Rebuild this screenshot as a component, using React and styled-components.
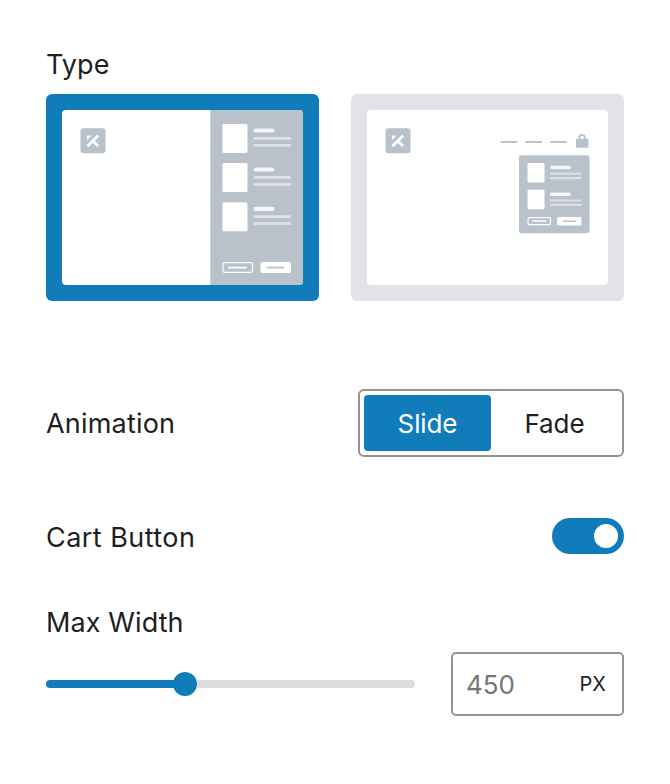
import React from "react";
import styled, { createGlobalStyle } from "styled-components";

const BLUE = "#117cba";
const SLATE = "#b9c1cb";

const GlobalStyle = createGlobalStyle`
  * { box-sizing: border-box; }
  body {
    margin: 0;
    background: #fff;
    color: #1e1e1e;
    font-family: Inter, "Liberation Sans", sans-serif;
  }
  button { font-family: inherit; color: inherit; margin: 0; }
`;

const Panel = styled.main`
  width: 670px;
  height: 784px;
  padding: 48px 46px 0;
  display: flex;
  flex-direction: column;
`;

const Label = styled.span`
  padding-top: ${(p) => p.$drop || 1}px;
  font-size: 27px;
  line-height: 32px;
  letter-spacing: ${(p) => p.$tracking};
  white-space: nowrap;
`;

const TypeOptions = styled.div`
  display: flex;
  justify-content: space-between;
  margin-top: 13px;
`;

const TypeCard = styled.button`
  width: 273px;
  height: 207px;
  padding: 16px;
  border: 0;
  border-radius: 6px;
  background: ${(p) => (p.$selected ? BLUE : "#e1e3e9")};
`;

const Preview = styled.svg`
  display: block;
  width: 241px;
  height: 175px;
  border-radius: 4px;
  background: #fff;
`;

const Row = styled.div`
  display: flex;
  align-items: center;
  justify-content: space-between;
  height: ${(p) => p.$height}px;
  margin-top: ${(p) => p.$gap}px;
`;

const Segmented = styled.div`
  display: flex;
  width: 266px;
  height: 68px;
  padding: 4px;
  border: 2px solid #949494;
  border-radius: 6px;
`;

const Segment = styled.button`
  flex: 1;
  height: 56px;
  padding: 1px 0 0;
  border: 0;
  border-radius: 4px;
  font-size: 26px;
  letter-spacing: -0.1px;
  background: ${(p) => (p.$active ? BLUE : "transparent")};
  color: ${(p) => (p.$active ? "#fff" : "#1e1e1e")};
`;

const Toggle = styled.button`
  display: flex;
  align-items: center;
  justify-content: flex-end;
  width: 72px;
  height: 36px;
  padding: 0 6px;
  border: 0;
  border-radius: 18px;
  background: ${BLUE};
`;

const ToggleKnob = styled.span`
  width: 24px;
  height: 24px;
  border-radius: 50%;
  background: #fff;
`;

const Slider = styled.div`
  display: flex;
  align-items: center;
  width: 369px;
  height: 24px;
`;

const SliderFill = styled.div`
  width: 131px;
  height: 8px;
  margin-right: -4px;
  border-radius: 4px 0 0 4px;
  background: ${BLUE};
`;

const SliderThumb = styled.div`
  width: 24px;
  height: 24px;
  border-radius: 50%;
  background: ${BLUE};
`;

const SliderRest = styled.div`
  flex: 1;
  height: 8px;
  border-radius: 0 4px 4px 0;
  background: #ddd;
`;

const NumberField = styled.div`
  display: flex;
  align-items: center;
  justify-content: space-between;
  width: 173px;
  height: 64px;
  padding: 0 16px 0 13px;
  border: 2px solid #949494;
  border-radius: 5px;
`;

const NumberValue = styled.span`
  padding-top: 1px;
  font-size: 26px;
  color: #757575;
`;

const Unit = styled.span`
  font-size: 20px;
  line-height: 24px;
  color: #1e1e1e;
`;

function BrandMark() {
  return (
    <g>
      <rect x="18.5" y="18.3" width="25" height="25" rx="3" fill={SLATE} />
      <g fill="none" stroke="#fff" strokeWidth="2.7">
        <path d="M36.2 25.5 25.4 36.3" />
        <path d="M31 31.3 36 36" />
      </g>
      <path d="M25 25.4h4.6l-4.6 4.6z" fill="#fff" />
    </g>
  );
}

function CartItem({ y }) {
  return (
    <g fill="#fff">
      <rect x="160.5" y={y} width="25" height="29" rx="1.5" />
      <rect x="191.5" y={y + 4.4} width="21" height="4.2" rx="2" opacity=".85" />
      <rect x="191.5" y={y + 13} width="37.5" height="2.7" rx="1" opacity=".55" />
      <rect x="191.5" y={y + 20} width="37.5" height="2.7" rx="1" opacity=".55" />
    </g>
  );
}

function MiniCartItem({ y }) {
  return (
    <g fill="#fff">
      <rect x="160.5" y={y} width="17" height="19.5" rx="1.2" />
      <rect x="183" y={y + 2.8} width="21" height="3.5" rx="1.7" opacity=".85" />
      <rect x="183" y={y + 9.6} width="31.5" height="2.2" rx=".8" opacity=".5" />
      <rect x="183" y={y + 14} width="31.5" height="2.2" rx=".8" opacity=".5" />
    </g>
  );
}

function OffCanvasPreview() {
  return (
    <Preview viewBox="0 0 241 175">
      <BrandMark />
      <path d="M148.3 0H241v175h-92.7z" fill={SLATE} />
      {[14, 53, 92.3].map((y) => (
        <CartItem key={y} y={y} />
      ))}
      <rect x="161" y="152.6" width="29.5" height="9.8" rx="1.5" fill="none" stroke="#fff" strokeWidth="1.2" />
      <rect x="166" y="156.7" width="19" height="1.7" rx=".8" fill="#fff" />
      <rect x="198.5" y="152" width="30.5" height="11" rx="1.8" fill="#fff" />
      <rect x="204.5" y="156.7" width="18" height="1.7" rx=".8" fill={SLATE} />
    </Preview>
  );
}

function DropdownPreview() {
  return (
    <Preview viewBox="0 0 241 175">
      <BrandMark />
      {[133.5, 158.2, 183].map((x) => (
        <rect key={x} x={x} y="31" width="17" height="2" rx="1" fill={SLATE} />
      ))}
      <rect x="209" y="28.8" width="12.5" height="8.9" rx="1" fill={SLATE} />
      <path d="M212.2 30v-2.2a2.9 2.9 0 0 1 5.8 0V30" fill="none" stroke={SLATE} strokeWidth="1.8" />
      <rect x="152" y="45.3" width="70.5" height="78" rx="3" fill={SLATE} />
      <MiniCartItem y={53} />
      <MiniCartItem y={79.8} />
      <rect x="161.1" y="107.6" width="22.4" height="7" rx="1.4" fill="none" stroke="#fff" strokeWidth="1.2" />
      <rect x="165" y="110.3" width="14.5" height="1.5" rx=".7" fill="#fff" />
      <rect x="190" y="107" width="24.5" height="8.5" rx="1.7" fill="#fff" />
      <rect x="195.5" y="110.5" width="14" height="1.4" rx=".7" fill={SLATE} />
    </Preview>
  );
}

export default function App() {
  return (
    <>
      <GlobalStyle />
      <Panel>
        <Label $tracking="0.1px">Type</Label>
        <TypeOptions>
          <TypeCard $selected aria-label="Off canvas">
            <OffCanvasPreview />
          </TypeCard>
          <TypeCard aria-label="Dropdown">
            <DropdownPreview />
          </TypeCard>
        </TypeOptions>
        <Row $gap={88} $height={68}>
          <Label $tracking="0.2px">Animation</Label>
          <Segmented>
            <Segment $active>Slide</Segment>
            <Segment>Fade</Segment>
          </Segmented>
        </Row>
        <Row $gap={61} $height={36}>
          <Label $tracking="0.45px" $drop={3}>Cart Button</Label>
          <Toggle role="switch" aria-checked="true" aria-label="Cart Button">
            <ToggleKnob />
          </Toggle>
        </Row>
        <Row $gap={52} $height={32}>
          <Label $tracking="0.1px">Max Width</Label>
        </Row>
        <Row $gap={14} $height={64}>
          <Slider>
            <SliderFill />
            <SliderThumb />
            <SliderRest />
          </Slider>
          <NumberField>
            <NumberValue>450</NumberValue>
            <Unit>PX</Unit>
          </NumberField>
        </Row>
      </Panel>
    </>
  );
}
